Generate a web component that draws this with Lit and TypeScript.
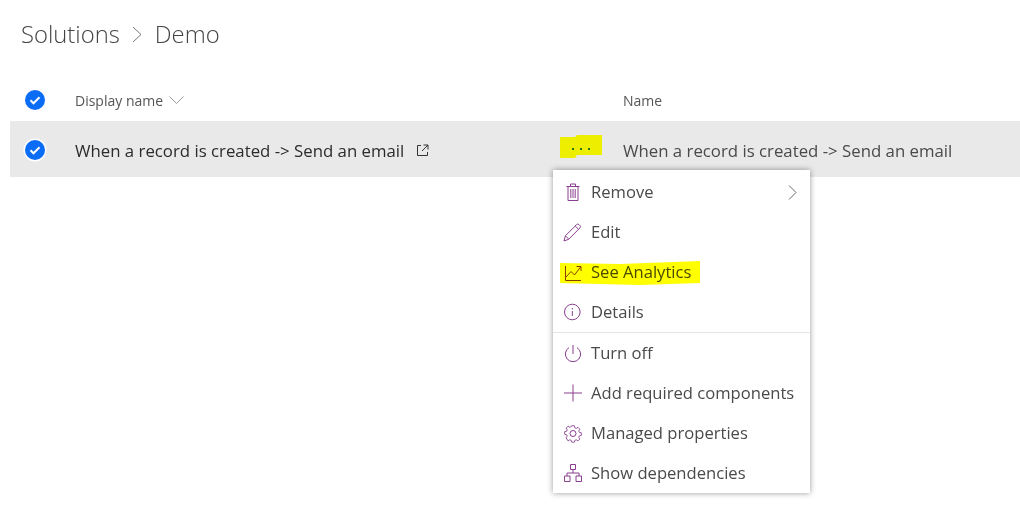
import { LitElement, html, css, svg } from "lit";
import { customElement } from "lit/decorators.js";

const icons: Record<string, unknown> = {
  trash: svg`<path d="M3.500 4.500h13M7.500 4.500V2h5v2.500M5 4.500V18.500h10V4.500M7.800 7v9M10 7v9M12.200 7v9"/>`,
  edit: svg`<path transform="translate(-1 0)" d="M2 19l1.400-5.200L14.600 2.600a1.600 1.600 0 0 1 2.300 0l1 1a1.600 1.600 0 0 1 0 2.300L6.800 17.200 2 19zM3.400 13.800l3.400 3.400M13.200 4l3.400 3.400"/>`,
  chart: svg`<path d="M2.500 4v14.500h15.500M3 15l5-5.500 3.500 3.500L17.500 5M13.500 4.500H18V9"/>`,
  info: svg`<circle cx="9.300" cy="10" r="7.800"/><path d="M9.300 9v5M9.300 6v1.500"/>`,
  power: svg`<path d="M10 2v9M6 4.600a7.600 7.600 0 1 0 8 0"/>`,
  plus: svg`<path d="M10 1.500v17M1 10h18"/>`,
  gear: svg`<path d="M8.400 1.800h3.200l.5 2.400 1.600.7 2.100-1.300 2.200 2.200-1.300 2.100.7 1.600 2.300.5v3l-2.300.5-.7 1.600 1.300 2.100-2.200 2.200-2.100-1.300-1.600.7-.5 2.100H8.400l-.5-2.100-1.600-.7-2.100 1.300L2 15.900l1.300-2.100-.7-1.600-2.300-.5v-3l2.300-.5.7-1.600L2 4.500 4.200 2.300l2.100 1.300 1.600-.7z" transform="translate(1.400 1.200) scale(.86)"/><circle cx="10" cy="10.500" r="3"/>`,
  tree: svg`<path d="M7.500 1.500h5v5h-5zM1.500 13h5.500v5.500H1.500zM13 13h5.500v5.500H13zM10 6.500V10M4 13v-3h12v3"/>`,
};

const check = (ring: boolean) => html`<svg class="check" width="24" height="24" viewBox="0 0 24 24" aria-hidden="true">
  ${ring ? svg`<circle cx="12" cy="12" r="11.500" fill="#fff"/>` : ""}
  <circle cx="12" cy="12" r="10" fill="#0b6cf5"/>
  <path d="M7.500 12.300l3 3 6-6" fill="none" stroke="#fff" stroke-width="2"/>
</svg>`;

@customElement("app-root")
export class AppRoot extends LitElement {
  static styles = css`
    :host { display: block; width: 1020px; height: 524px; background: #fff; position: relative; overflow: hidden;
      font-family: "Open Sans", "Noto Sans", sans-serif; color: #333; }
    .crumbs { display: flex; align-items: center; height: 34px; padding: 17px 0 0 21px; font-size: 23.800px; font-weight: 300; color: #444; }
    .crumbs svg { margin: 0 12px; }
    .head, .row { display: grid; grid-template-columns: 65px 548px 1fr; align-items: center; margin-left: 10px; }
    .head { height: 42px; margin-top: 28px; font-size: 14px; color: #555; }
    .head .cell:first-child { padding-left: 13px; display: flex; }
    .row .cell:first-child { padding: 2px 0 0 13px; display: flex; }
    .sort { display: flex; align-items: center; gap: 6px; }
    .row { height: 56px; background: #e9e9e9; font-size: 16.800px; }
    .row .title, .row .name { padding-top: 3px; }
    .row .title { display: flex; align-items: center; color: #2b2b2b; }
    .row .title svg { margin-left: 12px; }
    .row .name { color: #4a4a4a; }
    .dots { position: absolute; left: 560px; top: 135px; width: 42px; height: 23px; background: #eeee00; display: flex; padding: 13px 0 0 12px; box-sizing: border-box; gap: 6px;
      clip-path: polygon(0 2px, 15px 2px, 17px 0, 42px 0, 42px 20px, 17px 20px, 15px 23px, 0 23px); }
    .dots i { width: 2px; height: 2px; background: #2a7a10; }
    .menu { position: absolute; left: 553px; top: 170px; width: 257px; height: 323px; box-sizing: border-box; background: #fff; padding-top: 2px;
      box-shadow: 0 0 6px rgba(0,0,0,.4); font-size: 16.600px; color: #4a4a4a; }
    .item { height: 40px; display: flex; align-items: center; position: relative; }
    .item span { padding-bottom: 2px; }
    .item .ic { width: 20px; height: 20px; margin: 0 8px 0 10px; fill: none; stroke: #8a3f8e; stroke-width: 1; flex: none; }
    .item .arrow { position: absolute; right: 13px; top: 13px; }
    .hl { background: #ffff00; position: absolute; left: 7px; top: 9px; width: 140px; height: 24px; mix-blend-mode: multiply;
      clip-path: polygon(0 2px, 60px 3px, 140px 0, 140px 22px, 80px 24px, 40px 23px, 0 22px); }
    .sep { height: 1px; background: #e4e4e4; }
  `;

  private item(icon: string, label: string, extra: unknown = "") {
    return html`<div class="item">
      <svg class="ic" viewBox="0 0 20 20" aria-hidden="true">${icons[icon]}</svg>
      <span>${label}</span>${extra}
    </div>`;
  }

  render() {
    const title = "When a record is created -> Send an email";
    return html`
      <div class="crumbs">
        <span>Solutions</span>
        <svg width="11" height="17" viewBox="0 0 11 17" fill="none" stroke="#777" stroke-width="1"><path d="M1 1l8 7.500-8 7.500"/></svg>
        <span>Demo</span>
      </div>
      <div class="head">
        <div class="cell">${check(false)}</div>
        <div class="cell sort">Display name
          <svg width="15" height="8" viewBox="0 0 15 8" fill="none" stroke="#999" stroke-width="1"><path d="M.5.500l7 7 7-7"/></svg>
        </div>
        <div class="cell">Name</div>
      </div>
      <div class="row">
        <div class="cell">${check(true)}</div>
        <div class="cell title">${title}
          <svg width="13" height="13" viewBox="0 0 13 13" fill="none" stroke="#333" stroke-width="1"><path d="M5 1.500H1.500v10h10V8M7.500 1h4.500v4.500M12 1L6 7"/></svg>
        </div>
        <div class="cell name">${title}</div>
      </div>
      <div class="dots"><i></i><i></i><i></i></div>
      <div class="menu">
        ${this.item("trash", "Remove", html`<svg class="arrow" width="9" height="15" viewBox="0 0 9 15" fill="none" stroke="#666" stroke-width="1"><path d="M1 .500l7 7-7 7"/></svg>`)}
        ${this.item("edit", "Edit")}
        ${this.item("chart", "See Analytics", html`<div class="hl"></div>`)}
        ${this.item("info", "Details")}
        <div class="sep"></div>
        ${this.item("power", "Turn off")}
        ${this.item("plus", "Add required components")}
        ${this.item("gear", "Managed properties")}
        ${this.item("tree", "Show dependencies")}
      </div>
    `;
  }
}
